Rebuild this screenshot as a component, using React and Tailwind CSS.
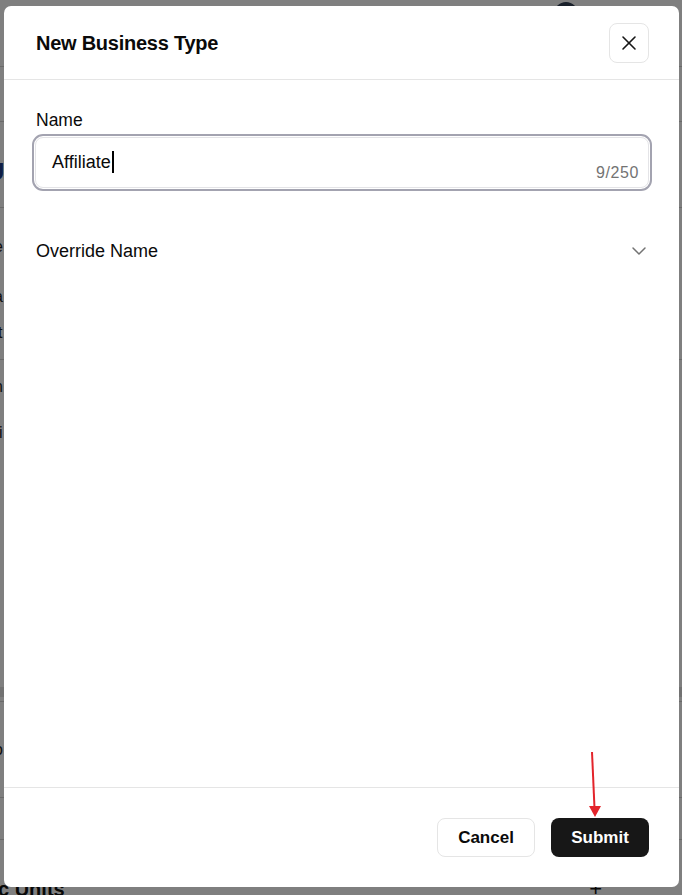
import React from "react";
import { X, ChevronDown } from "lucide-react";

function Tail({ className, textClass, children }) {
  return (
    <div className={className}>
      <span className={textClass}>{children}</span>
    </div>
  );
}

export default function App() {
  return (
    <div className="relative h-[895px] w-[682px] overflow-hidden bg-white font-['Liberation_Sans',Arial,sans-serif]">
      {/* background page (mostly hidden behind the dialog) */}
      <div className="flex flex-col">
        <div className="h-[67px] border-b border-[#d4d4d4] pl-[554px] pt-[2px]">
          <div className="h-6 w-6 rounded-full bg-[#334155]" />
        </div>
        <div className="h-[55px] border-b border-[#d4d4d4]" />
        <div className="h-[86px] border-b border-[#d4d4d4] pt-[38px]">
          <span className="-ml-[13px] block text-[24px] font-bold leading-6 text-[#1e3a8a]">U</span>
        </div>
        <div className="flex h-[152px] flex-col border-b border-[#d4d4d4]">
          <Tail className="mt-[31px] h-4" textClass="-ml-[6px] block text-[16px] leading-4 text-[#1f1f1f]">e</Tail>
          <Tail className="mt-[34px] h-4" textClass="-ml-[6px] block text-[16px] leading-4 text-[#1f1f1f]">a</Tail>
          <Tail className="mt-[20px] h-4" textClass="-ml-[2px] block text-[16px] leading-4 text-[#1f1f1f]">t</Tail>
        </div>
        <div className="flex h-[327px] flex-col">
          <Tail className="mt-[19px] h-4" textClass="-ml-[6px] block text-[16px] leading-4 text-[#1f1f1f]">n</Tail>
          <Tail className="mt-[30px] h-4" textClass="-ml-[1px] block text-[16px] leading-4 text-[#1f1f1f]">i</Tail>
        </div>
        <div className="h-[10px] bg-[#e5e5e5]" />
        <div className="h-[5px] border-b border-[#d4d4d4]" />
        <div className="flex h-[96px] flex-col border-b border-[#d4d4d4]">
          <Tail className="mt-[40px] h-4" textClass="-ml-[6px] block text-[16px] leading-4 text-[#1f1f1f]">o</Tail>
        </div>
        <div className="h-[42px] border-b border-[#d4d4d4]" />
        <div className="flex items-start pt-[37px]">
          <span className="-ml-[2px] text-[20px] font-bold leading-6 text-[#111]">c Units</span>
          <span className="ml-auto mr-[80px] text-[22px] leading-6 text-[#111]">+</span>
        </div>
      </div>

      {/* backdrop */}
      <div className="absolute inset-0 bg-black/50" />

      {/* dialog */}
      <div className="absolute left-[4px] top-[6px] flex h-[881px] w-[675px] flex-col rounded-[7px] bg-white">
        <div className="flex h-[74px] shrink-0 items-center justify-between border-b border-[#e5e5e5] pl-8 pr-[30px]">
          <h2 className="text-[20px] font-bold leading-7 tracking-[-0.25px] text-[#0a0a0a]">
            New Business Type
          </h2>
          <button className="flex h-10 w-10 items-center justify-center rounded-lg border border-[#e5e5e5] bg-white text-[#171717]">
            <X size={24} strokeWidth={1.6} />
          </button>
        </div>

        <div className="flex flex-1 flex-col pl-8 pr-[30px] pt-[28px]">
          <label className="text-[17.5px] leading-6 text-[#0a0a0a]">Name</label>
          <div className="-ml-[4px] -mr-[3px] mt-[2px] rounded-[11px] border-2 border-[#a3a3b0] p-px">
            <div className="flex h-[51px] rounded-lg border border-[#e4e4e7] pl-4 pr-[9px]">
              <div className="flex-1 pt-[12px]">
                <div className="flex h-6 items-center text-[18px] leading-6 text-[#0a0a0a]">
                  Affiliate
                  <span className="ml-px inline-block h-[22px] w-[2px] bg-black" />
                </div>
              </div>
              <div className="self-end pb-[4px] text-[16px] leading-5 tracking-[0.6px] text-[#737373]">
                9/250
              </div>
            </div>
          </div>
          <div className="mt-10 flex h-10 items-center justify-between">
            <span className="text-[18px] leading-6 text-[#0a0a0a]">Override Name</span>
            <ChevronDown size={24} strokeWidth={1.5} className="-mr-[2px] text-[#737373]" />
          </div>
        </div>

        <div className="flex h-[100px] shrink-0 items-start justify-end gap-4 border-t border-[#e5e5e5] pr-[30px] pt-[30px]">
          <button className="h-[39px] w-[98px] rounded-lg border border-[#e5e5e5] bg-white text-[17px] font-bold text-[#0a0a0a]">
            Cancel
          </button>
          <button className="h-[39px] w-[98px] rounded-lg bg-[#171717] text-[17px] font-bold text-white">
            Submit
          </button>
        </div>
      </div>

      {/* red annotation arrow */}
      <svg
        className="pointer-events-none absolute left-0 top-0"
        width="682"
        height="895"
        viewBox="0 0 682 895"
      >
        <line x1="592" y1="752" x2="594.5" y2="808" stroke="#e3242b" strokeWidth="2" />
        <polygon points="589,806 601,806 595,817" fill="#e3242b" />
      </svg>
    </div>
  );
}
